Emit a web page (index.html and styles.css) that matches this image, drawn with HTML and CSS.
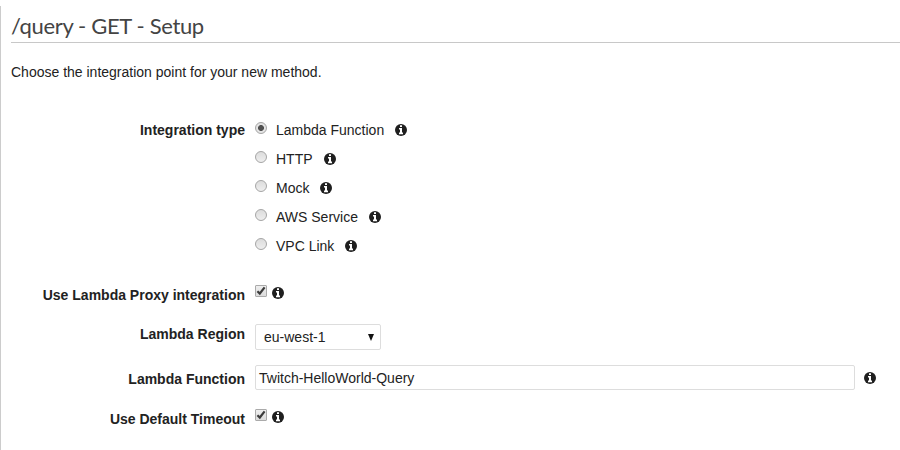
FILE: index.html
```html
<!DOCTYPE html>
<html lang="en">
<head>
<meta charset="utf-8">
<title>Method setup</title>
<link rel="stylesheet" href="styles.css">
</head>
<body>
<svg width="0" height="0" class="defs">
  <symbol id="info" viewBox="0 0 12 12">
    <circle cx="6" cy="6" r="6" fill="#1f1f1f"/>
    <path d="M5 1.2h2v1.9H5zM4 4h3v4.6h1v1.6H4V8.6h1V5.5H4z" fill="#fff"/>
  </symbol>
  <symbol id="check" viewBox="0 0 10 10">
    <path d="M1.4 5.2 3.8 7.5 8.6 1.4" fill="none" stroke="#3c3c3c" stroke-width="2.2"/>
  </symbol>
</svg>
<main class="panel">
  <h1 class="title">/query - GET - Setup</h1>
  <p class="intro">Choose the integration point for your new method.</p>
  <form class="form">
    <div class="row types">
      <span class="label">Integration type</span>
      <div class="options">
        <label class="option"><i class="radio on"></i><span>Lambda Function</span><svg class="info"><use href="#info"/></svg></label>
        <label class="option"><i class="radio"></i><span>HTTP</span><svg class="info"><use href="#info"/></svg></label>
        <label class="option"><i class="radio"></i><span>Mock</span><svg class="info"><use href="#info"/></svg></label>
        <label class="option"><i class="radio"></i><span>AWS Service</span><svg class="info"><use href="#info"/></svg></label>
        <label class="option"><i class="radio"></i><span>VPC Link</span><svg class="info"><use href="#info"/></svg></label>
      </div>
    </div>
    <div class="row proxy">
      <span class="label">Use Lambda Proxy integration</span>
      <div class="toggle"><svg class="box"><use href="#check"/></svg><svg class="info"><use href="#info"/></svg></div>
    </div>
    <div class="row region">
      <span class="label">Lambda Region</span>
      <div class="select"><span>eu-west-1</span><svg class="arrow" viewBox="0 0 6 7"><path d="M0 0h6L3 7z" fill="#111"/></svg></div>
    </div>
    <div class="row function">
      <span class="label">Lambda Function</span>
      <div class="field"><div class="input">Twitch-HelloWorld-Query</div><svg class="info"><use href="#info"/></svg></div>
    </div>
    <div class="row timeout">
      <span class="label">Use Default Timeout</span>
      <div class="toggle"><svg class="box"><use href="#check"/></svg><svg class="info"><use href="#info"/></svg></div>
    </div>
  </form>
</main>
</body>
</html>
```
FILE: styles.css
```css
* { box-sizing: border-box; }
body {
  margin: 0;
  padding-top: 6px;
  height: 450px;
  overflow: hidden;
  background: #fff;
  color: #222;
  font: 14px/20px "Liberation Sans", Arial, sans-serif;
}
.defs { display: none; }
.panel {
  height: 444px;
  padding-left: 10px;
  border-left: 1px solid #ccc;
}
.title {
  margin: 0;
  height: 37px;
  padding-top: 5px;
  border-bottom: 1px solid #c8c8c8;
  color: #444;
  font: 400 22px/30px Lato, sans-serif;
  letter-spacing: -0.35px;
}
.intro { margin: 19px 0 0; }
.form { margin-top: 38px; }
.row {
  display: grid;
  grid-template-columns: 234px 1fr;
  column-gap: 10px;
  align-items: start;
}
.label {
  font-weight: 700;
  text-align: right;
  white-space: nowrap;
}
.types { height: 165px; }
.proxy { height: 39px; }
.region { height: 45px; }
.function { height: 40px; }
.option { display: flex; height: 29px; }
.option .info { margin: 4px 0 0 11px; }
.radio {
  width: 12px;
  height: 12px;
  margin: 2px 9px 0 0;
  border: 1px solid #a5a5a5;
  border-radius: 50%;
  background: linear-gradient(#dcdcdc, #eee);
}
.radio.on { background: radial-gradient(circle, #505050 0 2.6px, #e4e4e4 3.3px); }
.info { display: block; flex: none; width: 12px; height: 12px; }
.toggle { display: flex; }
.toggle .info { margin: 2px 0 0 5px; }
.box {
  width: 12px;
  height: 12px;
  border: 1px solid #aaa;
  border-radius: 1px;
  background: linear-gradient(#eee, #dcdcdc);
}
.select {
  display: flex;
  justify-content: space-between;
  width: 126px;
  height: 26px;
  padding: 2px 6px 0 8px;
  border: 1px solid #ddd;
  border-radius: 2px;
}
.arrow { width: 6px; height: 7px; margin-top: 7px; }
.field { display: flex; margin-top: -4px; }
.input {
  width: 600px;
  height: 25px;
  padding: 2px 3px;
  border: 1px solid #ddd;
  border-radius: 2px;
}
.field .info { margin: 7px 0 0 9px; }
```
